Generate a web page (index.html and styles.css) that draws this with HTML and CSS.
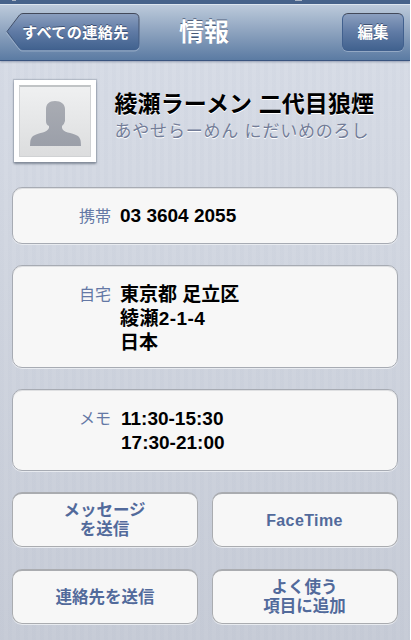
FILE: index.html
```html
<!DOCTYPE html>
<html lang="ja">
<head>
<meta charset="utf-8">
<title>情報</title>
<link rel="stylesheet" href="styles.css">
</head>
<body>
<div class="screen">
  <div class="status"><i class="speck speck-left"></i><i class="speck speck-right"></i></div>
  <header class="navbar">
    <div class="back">
      <svg class="back-shape" width="136" height="40" viewBox="0 0 136 40">
        <defs>
          <linearGradient id="fill" x1="0" y1="0" x2="0" y2="1">
            <stop offset="0" stop-color="#8b9fbf"/>
            <stop offset=".5" stop-color="#607ba5"/>
            <stop offset="1" stop-color="#41628f"/>
          </linearGradient>
          <linearGradient id="edge" x1="0" y1="0" x2="0" y2="1">
            <stop offset="0" stop-color="#42495a"/>
            <stop offset="1" stop-color="#41608e"/>
          </linearGradient>
        </defs>
        <path d="M17 2H129Q134 2 134 7V33Q134 38 129 38H17Q15 38 14 36L1.500 20L14 4Q15 2 17 2Z" fill="none" stroke="#a5b6cf" stroke-opacity=".7" transform="translate(0 1)"/>
        <path d="M18 1.500H129Q134 1.500 134 6.500V32.500Q134 37.500 129 37.500H18Q16 37.500 14.500 36L2 19.500L14.500 3Q16 1.500 18 1.500Z" fill="url(#fill)" stroke="url(#edge)"/>
      </svg>
      <span class="back-label">すべての連絡先</span>
    </div>
    <h1 class="title">情報</h1>
    <div class="edit">編集</div>
  </header>
  <main class="content">
    <section class="person">
      <div class="photo">
        <svg class="photo-image" width="72" height="72" viewBox="0 0 70 69">
          <defs><linearGradient id="man" x1="0" y1="0" x2="0" y2="1"><stop offset="0" stop-color="#a9acb3"/><stop offset="1" stop-color="#9b9fa9"/></linearGradient></defs>
          <path d="M35 14C41 14 45 17 45 22V34Q44 38 42 39V41C43 46 51 45 58 49Q61 51 61 59H10Q10 51 13 49C20 45 27 46 29 41V39Q26 38 26 34V22C26 17 29 14 35 14Z" fill="url(#man)"/>
        </svg>
      </div>
      <div class="names">
        <div class="name">綾瀬ラーメン 二代目狼煙</div>
        <div class="kana">あやせらーめん にだいめのろし</div>
      </div>
    </section>
    <section class="card phone"><div class="label">携帯</div><div class="value">03 3604 2055</div></section>
    <section class="card home"><div class="label">自宅</div><div class="value">東京都 足立区<br><span class="street">綾瀬2-1-4</span><br>日本</div></section>
    <section class="card memo"><div class="label">メモ</div><div class="value">11:30-15:30<br>17:30-21:00</div></section>
    <div class="actions">
      <div class="action">メッセージ<br>を送信</div>
      <div class="action latin">FaceTime</div>
      <div class="action single">連絡先を送信</div>
      <div class="action">よく使う<br>項目に追加</div>
    </div>
  </main>
</div>
</body>
</html>
```
FILE: styles.css
```css
* { box-sizing: border-box; }
body {
  margin: 0;
  background: #fff;
  font-family: "Liberation Sans", "Noto Sans CJK JP", sans-serif;
}
.screen {
  width: 410px;
  height: 640px;
  overflow: hidden;
  background:
    repeating-linear-gradient(90deg, rgba(120, 135, 165, .03) 0 4px, transparent 4px 8px),
    linear-gradient(#d7dce6 60px, #d2d7e1 240px, #c7ccd7 640px);
}
.status {
  position: relative;
  height: 4px;
  background: #46628a;
}
.speck {
  position: absolute;
  top: 0;
  height: 1px;
  background: #aab5c5;
}
.speck-left { left: 12px; width: 4px; }
.speck-right { left: 295px; width: 7px; }
.navbar {
  display: grid;
  grid-template-columns: 136px 1fr 62px;
  height: 57px;
  padding: 9px 6px 0 5px;
  border-top: 1px solid #dce5ef;
  border-bottom: 1px solid #3a5580;
  box-shadow: 0 -1px #35527d, 0 1px 2px rgba(70, 85, 115, .45);
  background: linear-gradient(#bccadb, #8ca2be 50%, #5b7ba3);
  color: #fff;
  font-weight: bold;
  text-shadow: 0 -1px 0 rgba(35, 50, 80, .65);
}
.back { display: grid; height: 40px; margin-top: -2px; }
.back-shape, .back-label { grid-area: 1 / 1; }
.back-label {
  padding: 0 0 0 17px;
  font-size: 15.2px;
  letter-spacing: .3px;
  line-height: 41px;
  white-space: nowrap;
}
.title {
  margin: 0 0 0 38px;
  font-size: 25px;
  line-height: 37px;
}
.edit {
  height: 38px;
  margin-top: -1px;
  border: 1px solid #41608e;
  border-top-color: #42495a;
  border-radius: 6px;
  background: linear-gradient(#8b9fbf, #607ba5 50%, #41628f);
  box-shadow: 0 1px rgba(165, 182, 207, .7);
  font-size: 15.5px;
  line-height: 37px;
  text-align: center;
}
.content { padding: 19px 12px 0; }
.person { display: flex; height: 107px; }
.photo {
  width: 82px;
  height: 82px;
  margin-left: 2px;
  padding: 5px;
  background: #fff;
  box-shadow: 0 0 1px 1px rgba(130, 140, 155, .4), 0 2px 2px rgba(80, 90, 105, .6);
}
.photo-image {
  display: block;
  background: linear-gradient(#eff0f1, #dcddde);
  border: 1px solid #d0d2d4;
  border-top: 2px solid #c1c4c6;
}
.names { margin: 9px 0 0 18.5px; white-space: nowrap; text-shadow: 0 1px #fff; }
.name { font-size: 23px; font-weight: bold; line-height: 30px; letter-spacing: .1px; color: #000; }
.kana { padding-top: 1px; font-size: 17px; line-height: 24px; letter-spacing: .8px; color: #737d98; }
.card {
  display: flex;
  margin-bottom: 21px;
  border: 1px solid #a7abb3;
  border-radius: 10px;
  background: #f7f7f7;
  box-shadow: 0 1px #e8ebf0, inset 0 1px rgba(150, 154, 163, .25);
}
.phone { height: 57px; padding-top: 16px; }
.home { height: 103px; padding-top: 17px; }
.memo { height: 82px; padding-top: 17px; }
.label {
  width: 98px;
  font-size: 16px;
  line-height: 24px;
  text-align: right;
  color: #6478a5;
}
.phone .label { line-height: 25px; }
.value {
  margin-left: 9px;
  font-size: 19px;
  font-weight: bold;
  line-height: 24px;
  color: #000;
}
.street { letter-spacing: .4px; }
.memo .value { margin-left: 10px; }
.actions {
  display: grid;
  grid-template-columns: 186px 186px;
  grid-auto-rows: 55px;
  gap: 22px 14px;
}
.action {
  display: flex;
  align-items: center;
  justify-content: center;
  padding: 0 1px 1px 0;
  border: 1px solid #aaacb0;
  border-top-width: 2px;
  border-radius: 10px;
  background: #f7f7f7;
  box-shadow: 0 1px #e8ebf0;
  font-size: 16.5px;
  font-weight: bold;
  line-height: 19px;
  text-align: center;
  color: #526a9b;
}
.single { padding: 1px 0 0; }
.latin { padding-bottom: 0; font-size: 16px; letter-spacing: .4px; }
```
